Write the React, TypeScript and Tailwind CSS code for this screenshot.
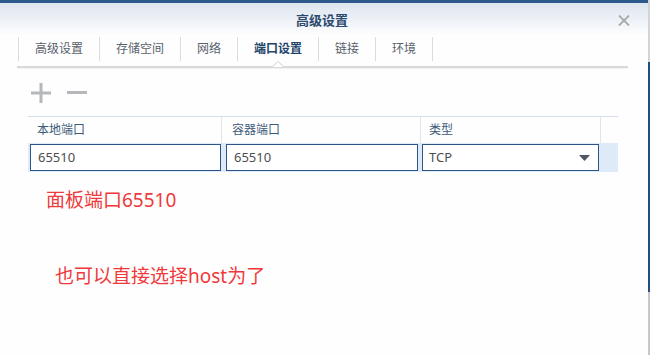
import React from "react";

const tabs = ["高级设置", "存储空间", "网络", "端口设置", "链接", "环境"];
const activeTab = "端口设置";

const font = { fontFamily: '"Noto Sans", "Noto Sans CJK SC", sans-serif' };

export default function App() {
  return (
    <div className="w-[650px] h-[355px] flex bg-white overflow-hidden" style={font}>
      <div className="w-[648px] flex flex-col bg-[#fefefe]">
        <div className="h-[3px] bg-[#2d5a8c]" />

        {/* title bar */}
        <div className="relative h-[34px] bg-gradient-to-b from-[#dde5ef] to-white flex items-center justify-center">
          <span className="text-[13px] font-bold text-[#2b4a6e] leading-none -ml-[4px] mt-[1px]">高级设置</span>
          <svg className="absolute right-[18px] top-[12px]" width="12" height="11" viewBox="0 0 12 11">
            <path d="M1 0.5 L11 10.5 M11 0.5 L1 10.5" stroke="#a9a9a9" strokeWidth="1.8" fill="none" />
          </svg>
        </div>

        {/* tabs */}
        <div className="ml-[18px] h-[24px] flex border-l border-[#d6dde6]">
          {tabs.map((t) => (
            <div
              key={t}
              className={
                "relative px-[16px] flex items-center border-r border-[#d6dde6] text-[12px] leading-none " +
                (t === activeTab ? "text-[#23446b] font-semibold" : "text-[#59616b]")
              }
            >
              {t}
              {t === activeTab && (
                <svg className="absolute left-1/2 -translate-x-1/2 top-[24px]" width="12" height="6" viewBox="0 0 12 6">
                  <path d="M0 6 L6 0.5 L12 6" stroke="#d0d0d0" strokeWidth="1" fill="#fff" />
                </svg>
              )}
            </div>
          ))}
        </div>
        <div className="ml-[17px] w-[611px] mt-[5px] h-[2px] bg-[#d9d9d9] shadow-[0_1px_1px_rgba(0,0,0,0.05)]" />

        {/* toolbar */}
        <div className="ml-[31px] mt-[15px] flex items-center gap-[16px] h-[20px]">
          <svg width="20" height="20" viewBox="0 0 20 20">
            <path d="M0 10 H20 M10 0 V20" stroke="#b5b7ba" strokeWidth="3" fill="none" />
          </svg>
          <svg width="20" height="20" viewBox="0 0 20 20">
            <path d="M0 9.5 H20" stroke="#b5b7ba" strokeWidth="3" fill="none" />
          </svg>
        </div>

        {/* table */}
        <div className="ml-[28px] w-[590px] mt-[13px]">
          <div className="grid grid-cols-[194px_199px_180px_17px] h-[27px] border-t border-[#d5dfeb] text-[12px] text-[#3d5a7a]">
            <div className="pl-[9px] flex items-center border-r border-[#dde6f0]">本地端口</div>
            <div className="pl-[10px] flex items-center border-r border-[#dde6f0]">容器端口</div>
            <div className="pl-[8px] flex items-center border-r border-[#dde6f0]">类型</div>
            <div />
          </div>
          <div className="h-[29px] bg-[#dfeaf8] flex items-center pl-[2px] text-[13px] text-[#4d4d4d]">
            <div className="w-[191px] h-[27px] bg-white border border-[#2c5688] flex items-center pl-[7px]">65510</div>
            <div className="ml-[5px] w-[192px] h-[27px] bg-white border border-[#2c5688] flex items-center pl-[7px]">65510</div>
            <div className="ml-[4px] w-[177px] h-[27px] bg-white border border-[#2c5688] flex items-center justify-between pl-[6px] pr-[8px]">
              <span>TCP</span>
              <svg width="11" height="6" viewBox="0 0 11 6">
                <path d="M0 0 H11 L5.5 6 Z" fill="#4f565e" />
              </svg>
            </div>
          </div>
        </div>

        {/* annotations */}
        <div className="ml-[46px] mt-[16px] text-[19px] leading-[24px] text-[#f0393b]">面板端口65510</div>
        <div className="ml-[55px] mt-[52px] text-[19px] leading-[24px] text-[#f0393b]">也可以直接选择host为了</div>
      </div>

      {/* neighbouring window edge */}
      <div className="w-[2px] flex flex-col">
        <div className="h-[62px] bg-[#d4d4d4]" />
        <div className="h-[230px] bg-[#234f80]" />
        <div className="flex-1 bg-[#c8c8c8]" />
      </div>
    </div>
  );
}
